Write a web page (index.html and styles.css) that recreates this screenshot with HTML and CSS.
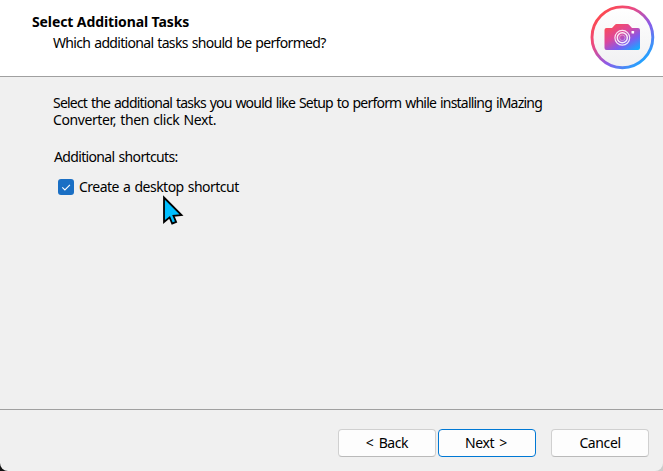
FILE: index.html
```
<!DOCTYPE html>
<html lang="en">
<head>
  <meta charset="UTF-8">
  <meta name="viewport" content="width=device-width, initial-scale=1.0">
  <title>Setup - iMazing Converter</title>
  <link rel="stylesheet" href="styles.css">
</head>
<body>

<div class="wizard">
  <header class="header">
    <div class="header-text">
      <h1>Select Additional Tasks</h1>
      <p>Which additional tasks should be performed?</p>
    </div>
    <svg class="logo" width="66" height="66" viewBox="0 0 66 66">
      <defs>
        <linearGradient id="ring" x1="0.1" y1="0.1" x2="0.85" y2="0.9">
          <stop offset="0" stop-color="#ff4a4a"/>
          <stop offset="0.3" stop-color="#ec4a80"/>
          <stop offset="0.65" stop-color="#8b5be8"/>
          <stop offset="1" stop-color="#1fa5ff"/>
        </linearGradient>
        <linearGradient id="camera" x1="0.1" y1="0" x2="0.9" y2="1">
          <stop offset="0" stop-color="#ff4d50"/>
          <stop offset="0.4" stop-color="#dc479b"/>
          <stop offset="0.7" stop-color="#7d5cf0"/>
          <stop offset="1" stop-color="#12adff"/>
        </linearGradient>
        <linearGradient id="disc" x1="0" y1="0" x2="0" y2="1">
          <stop offset="0" stop-color="#ffffff"/>
          <stop offset="1" stop-color="#f0f0f2"/>
        </linearGradient>
      </defs>
      <circle cx="33.400" cy="33.300" r="30.400" fill="url(#disc)" stroke="url(#ring)" stroke-width="2.900"/>
      <path d="M17.500 24H23l3-3.300q.5-.8 1.500-.8h11q1 0 1.500.8l3 3.300h6q2 0 2 2v18q0 2-2 2h-31.500q-2 0-2-2v-18q0-2 2-2z" fill="url(#camera)"/>
      <g fill="none" stroke="#fff">
        <circle cx="33.300" cy="33.800" r="7.400" stroke-width="1.200" opacity="0.85"/>
        <circle cx="33.300" cy="33.800" r="5" stroke-width="1.500" opacity="0.9"/>
        <circle cx="33.300" cy="33.800" r="2.800" stroke-width="0.700" opacity="0.55"/>
      </g>
      <rect x="42.500" y="27" width="2.600" height="2.600" rx="0.500" fill="#fff"/>
    </svg>
  </header>

  <main class="content">
    <div class="intro">
      <p class="intro-first">Select the additional tasks you would like Setup to perform while installing iMazing</p>
      <p class="intro-last">Converter, then click Next.</p>
    </div>
    <p class="group">Additional shortcuts:</p>
    <div class="task">
      <span class="checkbox">
        <svg width="16" height="16" viewBox="0 0 16 16">
          <path d="M4.300 8.300l2.600 2.600 5-5" fill="none" stroke="#fff" stroke-width="1.100"/>
        </svg>
      </span>
      <span class="task-label">Create a desktop shortcut</span>
    </div>
  </main>

  <footer class="footer">
    <button class="btn back">&lt; Back</button>
    <button class="btn next">Next &gt;</button>
    <button class="btn cancel">Cancel</button>
  </footer>
</div>

<svg class="cursor" width="22" height="32" viewBox="0 0 22 32">
  <path d="M2 2.500v24.500l5.600-4.600 2.600 6.100 3.900-1.600-2.600-6.100 8-.7z" fill="#00bfff" stroke="#000" stroke-width="1.800"/>
</svg>

</body>
</html>
```
FILE: styles.css
```
body {
  margin: 0;
  background: linear-gradient(to right, #111 50%, #ccc 50%);
  font-family: "Noto Sans", Tahoma, sans-serif;
  font-size: 14px;
  line-height: 17px;
  color: #000;
}
h1, p {
  margin: 0;
}
.wizard {
  display: flex;
  flex-direction: column;
  box-sizing: border-box;
  height: 471px;
  overflow: hidden;
  background-color: #f0f0f0;
  border-radius: 0 0 8px 8px;
}
.header {
  display: flex;
  justify-content: space-between;
  box-sizing: border-box;
  height: 77px;
  padding: 4px 8px 0 32px;
  background-color: #fff;
  border-bottom: 1px solid #a0a0a0;
}
.header-text {
  padding-top: 9px;
  white-space: nowrap;
}
.header h1 {
  font-size: 14px;
  line-height: 17px;
  font-weight: bold;
  letter-spacing: -0.1px;
}
.header p {
  margin: 4px 0 0 21px;
  letter-spacing: -0.68px;
  word-spacing: 1px;
}
.content {
  flex: 1;
  padding: 17px 53px 0;
  white-space: nowrap;
}
.intro-first {
  letter-spacing: -0.79px;
  word-spacing: 1px;
}
.intro-last {
  letter-spacing: -0.4px;
  word-spacing: 1px;
}
.group {
  margin: 20px 0 0 1px;
  letter-spacing: -0.65px;
  word-spacing: 1px;
}
.task {
  display: flex;
  align-items: center;
  margin: 13px 0 0 5px;
}
.checkbox {
  width: 16px;
  height: 16px;
  margin-right: 5px;
  background-color: #1a6fc4;
  border-radius: 3px;
}
.checkbox svg {
  display: block;
}
.task-label {
  letter-spacing: -0.52px;
  word-spacing: 1px;
}
.footer {
  display: flex;
  justify-content: flex-end;
  box-sizing: border-box;
  height: 62px;
  padding: 19px 14px 0 0;
  border-top: 1px solid #a0a0a0;
}
.btn {
  width: 98px;
  height: 28px;
  padding: 0 0 1px;
  background-color: #fdfdfd;
  border: 1px solid #d0d0d0;
  border-bottom-color: #bababa;
  border-radius: 4px;
  font-family: inherit;
  font-size: 14px;
  letter-spacing: -0.4px;
  word-spacing: 2px;
  color: #000;
}
.next {
  margin: 0 15px 0 2px;
  padding-right: 2px;
  border-color: #0078d4;
}
.cursor {
  position: absolute;
  left: 162px;
  top: 195px;
}
```
